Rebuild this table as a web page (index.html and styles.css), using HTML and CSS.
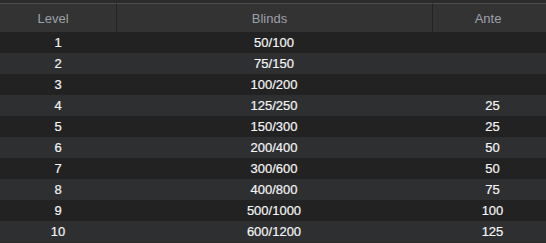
FILE: index.html
```html
<!DOCTYPE html>
<html>
<head>
<meta charset="utf-8">
<link rel="stylesheet" href="styles.css">
</head>
<body>
<div class="wrap">
<table class="blinds">
<thead>
<tr><th class="c-level">Level</th><th class="c-blinds">Blinds</th><th class="c-ante">Ante</th></tr>
</thead>
<tbody>
<tr><td>1</td><td>50/100</td><td></td></tr>
<tr><td>2</td><td>75/150</td><td></td></tr>
<tr><td>3</td><td>100/200</td><td></td></tr>
<tr><td>4</td><td>125/250</td><td>25</td></tr>
<tr><td>5</td><td>150/300</td><td>25</td></tr>
<tr><td>6</td><td>200/400</td><td>50</td></tr>
<tr><td>7</td><td>300/600</td><td>50</td></tr>
<tr><td>8</td><td>400/800</td><td>75</td></tr>
<tr><td>9</td><td>500/1000</td><td>100</td></tr>
<tr><td>10</td><td>600/1200</td><td>125</td></tr>
</tbody>
</table>
</div>
</body>
</html>
```
FILE: styles.css
```css
html, body {
  margin: 0;
  padding: 0;
  background: #2b2b2b;
  overflow: hidden;
}
.wrap {
  padding-top: 3px;
  width: 553px;
}
.blinds {
  width: 553px;
  border-collapse: separate;
  border-spacing: 0;
  table-layout: fixed;
  font-family: "Liberation Sans", Arial, sans-serif;
  font-size: 13px;
}
.blinds th {
  height: 28px;
  padding: 0 10px 0 0;
  font-weight: normal;
  color: #9ba1a9;
  text-align: center;
  background: #333333;
  border-top: 1px solid #4d4d4d;
  border-left: 1px solid #242424;
}
.blinds th:first-child {
  border-left: none;
}
.c-level { width: 106px; }
.c-blinds { width: 305px; }
.blinds td {
  height: 21px;
  padding: 0;
  text-align: center;
  color: #f4f4f4;
  line-height: 21px;
  -webkit-text-stroke: 0.2px #f4f4f4;
}
.blinds tbody tr:nth-child(odd) td { background: #222222; }
.blinds tbody tr:nth-child(even) td { background: #2e2f31; }
```
